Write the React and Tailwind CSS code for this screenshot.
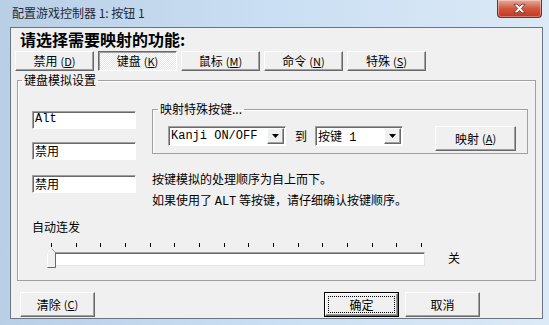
import React from "react";

const raised =
  "flex items-center justify-center bg-[#f0f0f0] border border-t-white border-l-white border-r-[#696969] border-b-[#696969] shadow-[inset_-1px_-1px_0_#a0a0a0]";
const sunken =
  "bg-white border border-t-[#a0a0a0] border-l-[#a0a0a0] border-r-white border-b-white shadow-[inset_1px_1px_0_#696969]";
const mono = "font-['Liberation_Mono','Noto_Sans_CJK_SC',monospace]";

const Arrow = () => (
  <div className={`${raised} w-[17px] h-full`}>
    <svg width="7" height="4" viewBox="0 0 7 4">
      <path d="M0 0h7L3.5 4z" fill="#000" />
    </svg>
  </div>
);

const Combo = ({ width, children }) => (
  <div className={`${sunken} flex h-[20px] items-stretch p-[1px]`} style={{ width }}>
    <div className={`flex-1 pl-[1px] text-[12px] leading-[16px] ${mono}`}>{children}</div>
    <Arrow />
  </div>
);

const Field = ({ children, className = "" }) => (
  <div className={`${sunken} h-[18px] w-[104px] pl-[2px] text-[12px] leading-[15px] ${className}`}>
    {children}
  </div>
);

const Key = ({ k }) => (
  <span className="ml-[3px] text-[11px]">
    (<u>{k}</u>)
  </span>
);

const tabs = [
  ["禁用", "D"],
  ["键盘", "K"],
  ["鼠标", "M"],
  ["命令", "N"],
  ["特殊", "S"],
];

export default function App() {
  const ticks = Array.from({ length: 16 });
  return (
    <div className="w-[549px] h-[325px] overflow-hidden flex flex-col bg-gradient-to-r from-[#b9cfe6] via-[#cadff3] to-[#dce9f6] font-['Noto_Sans_CJK_SC',sans-serif] text-black">
      {/* title bar */}
      <div className="h-[27px] flex items-start justify-between">
        <div className="pl-[12px] pt-[5px] text-[12px] leading-[16px] text-[#1e2a38]">
          配置游戏控制器 1: 按钮 1
        </div>
        <div className="mr-[7px] w-[45px] h-[18px] flex items-center justify-center rounded-b-[4px] border border-t-0 border-[#7b2b1f] bg-gradient-to-b from-[#e9a997] via-[#d2573f] to-[#c2361f] shadow-[inset_0_0_0_1px_rgba(255,255,255,0.35)]">
          <svg width="13" height="11" viewBox="0 0 13 11">
            <path
              d="M1 1.5L4 1l2.5 2.5L9 1l3 .5L8.3 5.5 12 9.5 9 10 6.5 7.5 4 10l-3-.5 3.7-4z"
              fill="#fff"
              stroke="#5a2a24"
              strokeWidth="0.8"
            />
          </svg>
        </div>
      </div>

      {/* client area */}
      <div className="ml-[10px] w-[533px] h-[292px] border border-[#6b7480] bg-[#f0f0f0] flex flex-col">
        <div className="h-[23px] pl-[9px] pt-[1px] text-[16px] font-bold leading-[20px]">
          请选择需要映射的功能:
        </div>

        <div className="flex gap-[4px] pl-[4px] h-[20px]">
          {tabs.map(([t, k]) =>
            k === "K" ? (
              <div
                key={k}
                className="w-[79px] h-full flex items-center justify-center text-[12px] border border-t-[#696969] border-l-[#696969] border-r-white border-b-white shadow-[inset_1px_1px_0_#a0a0a0] bg-[repeating-conic-gradient(#ffffff_0_25%,#e6e6e6_0_50%)] bg-[length:2px_2px]"
              >
                {t}
                <Key k={k} />
              </div>
            ) : (
              <div key={k} className={`${raised} w-[79px] h-full text-[12px]`}>
                {t}
                <Key k={k} />
              </div>
            )
          )}
        </div>

        <fieldset className="ml-[6px] mt-[2px] w-[519px] h-[208px] border border-[#a0a0a0] shadow-[inset_1px_1px_0_#ffffff]">
          <legend className="ml-[4px] px-[2px] text-[12px] leading-[14px]">键盘模拟设置</legend>

          <div className="flex h-[126px]">
            <div className="ml-[14px] mt-[24px] flex flex-col">
              <Field className={mono}>Alt</Field>
              <Field className="mt-[13px]">禁用</Field>
              <Field className="mt-[15px]">禁用</Field>
            </div>

            <div className="ml-[16px] mt-[15px] flex flex-col">
              <fieldset className="w-[376px] h-[57px] border border-[#a0a0a0] shadow-[inset_1px_1px_0_#ffffff]">
                <legend className="ml-[5px] px-[2px] text-[12px] leading-[14px]">映射特殊按键...</legend>
                <div className="flex items-start mt-[10px] ml-[15px]">
                  <Combo width={118}>Kanji ON/OFF</Combo>
                  <span className="ml-[9px] text-[12px] leading-[20px]">到</span>
                  <span className="ml-[8px]">
                    <Combo width={88}>
                      <span className="font-['Noto_Sans_CJK_SC',sans-serif]">按键</span> 1
                    </Combo>
                  </span>
                  <div className={`${raised} ml-[32px] w-[81px] h-[25px] text-[12px]`}>
                    映射
                    <Key k="A" />
                  </div>
                </div>
              </fieldset>
              <div className="mt-[14px] text-[12px] leading-[21px]">
                <p>按键模拟的处理顺序为自上而下。</p>
                <p>
                  如果使用了 <span className={mono}>ALT</span> 等按键，请仔细确认按键顺序。
                </p>
              </div>
            </div>
          </div>

          <div className="mt-[6px] pl-[14px] text-[12px] leading-[16px]">自动连发</div>

          <div className="mt-[8px] ml-[33px] w-[371px] h-[4px] flex justify-between">
            {ticks.map((_, i) => (
              <span key={i} className="w-[1px] h-full bg-black" />
            ))}
          </div>

          <div className="mt-[1px] flex items-start h-[20px]">
            <div className="relative ml-[29px] w-[378px] h-[20px]">
              <div className="absolute left-[1px] right-0 top-[4px] h-[14px] bg-white border border-t-[#a0a0a0] border-l-[#a0a0a0] border-r-[#e3e3e3] border-b-[#e3e3e3] shadow-[inset_1px_1px_0_#696969]" />
              <svg className="absolute left-0 top-0" width="9" height="20" viewBox="0 0 9 20">
                <path d="M0.5 19.5V4.5L4.5 0.5L8.5 4.5V19.5Z" fill="#f0f0f0" stroke="#a0a0a0" />
                <path d="M0.5 19.5V4.5L4.5 0.5" fill="none" stroke="#ffffff" />
                <path d="M8.5 4.5V19.5H0.5" fill="none" stroke="#696969" />
              </svg>
            </div>
            <span className="ml-[23px] mt-[3px] text-[12px] leading-[14px]">关</span>
          </div>
        </fieldset>

        <div className="mt-[11px] flex h-[25px]">
          <div className={`${raised} ml-[9px] w-[75px] h-full text-[12px]`}>
            清除
            <Key k="C" />
          </div>
          <div className="ml-[229px] w-[75px] h-full border border-black">
            <div className={`${raised} w-full h-full text-[12px] p-[2px]`}>
              <div className="w-full h-full flex items-center justify-center border border-dotted border-black">
                确定
              </div>
            </div>
          </div>
          <div className={`${raised} ml-[6px] w-[75px] h-full text-[12px]`}>取消</div>
        </div>
      </div>
    </div>
  );
}
